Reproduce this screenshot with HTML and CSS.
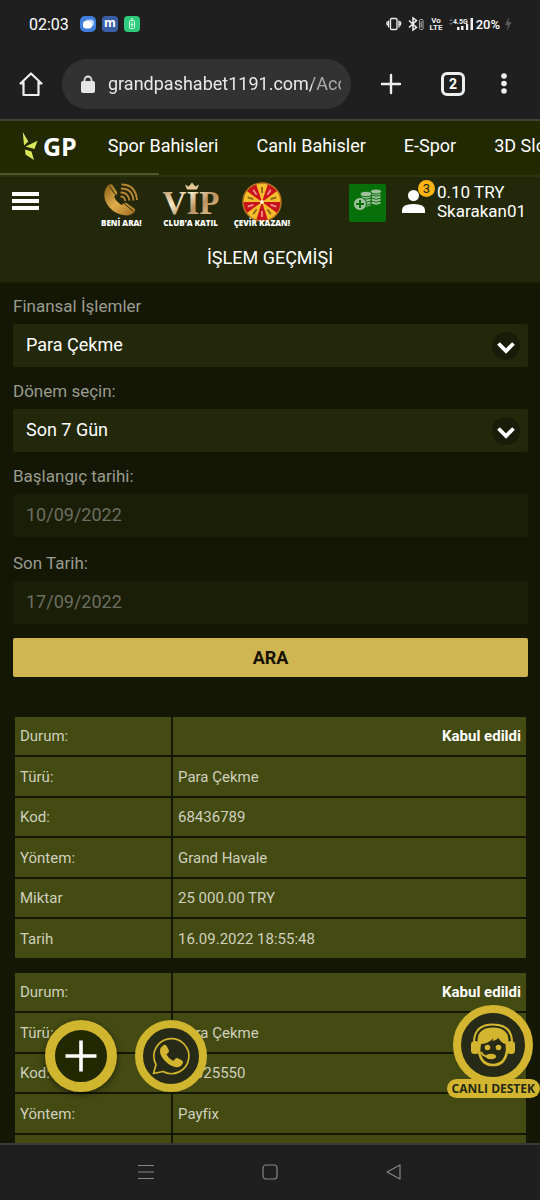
FILE: index.html
```html
<!DOCTYPE html>
<html lang="tr">
<head>
<meta charset="utf-8">
<meta name="viewport" content="width=device-width, initial-scale=1">
<title>İşlem Geçmişi</title>
<link rel="stylesheet" href="styles.css">
</head>
<body>
<div class="chrome">
  <div class="status">
    <time class="clock">02:03</time>
    <div class="status-apps">
      <svg width="16" height="16" viewBox="0 0 16 16"><rect width="16" height="16" rx="5" fill="#3f7fdc"/><rect x="5" y="3.500" width="9" height="7" rx="3" fill="#b5d3fb"/><rect x="3" y="5" width="9" height="7.500" rx="3" fill="#fff"/></svg>
      <svg width="16" height="16" viewBox="0 0 16 16"><rect width="16" height="16" rx="4" fill="#3b5fa6"/><text x="8" y="11" text-anchor="middle" class="app-letter">m</text></svg>
      <svg width="16" height="16" viewBox="0 0 16 16"><rect width="16" height="16" rx="4" fill="#2ecb7c"/><rect x="5.500" y="4.500" width="5" height="8" rx="1" fill="none" stroke="#d8ffe8"/><path d="M7 3h2M8.500 6l-1.500 2.500h2L7.500 11" fill="none" stroke="#d8ffe8"/></svg>
    </div>
    <div class="status-icons">
      <svg width="16" height="16" viewBox="0 0 16 16" fill="none" stroke="#eee" stroke-width="1.300"><rect x="4.500" y="2.500" width="6.500" height="11" rx="1"/><path d="M2.600 4.500v7M.8 5.500l.6 1-.6 1 .6 1-.6 1M13 4.500v7M14.800 5.500l-.6 1 .6 1-.6 1 .6 1"/></svg>
      <svg width="16" height="16" viewBox="0 0 16 16" fill="none" stroke="#eee" stroke-width="1.500"><path d="M1 4.500l7.500 7L5 14V2l3.500 2.500-7.500 7"/><rect x="11.500" y="3.500" width="3.500" height="10" rx="1" stroke="#aaa" stroke-width="1"/><path d="M13.200 5.500v6" stroke="#888"/></svg>
      <svg width="12" height="16" viewBox="0 0 12 16" class="tiny volte"><text x="6" y="7" text-anchor="middle">Vo</text><text x="6" y="14" text-anchor="middle">LTE</text></svg>
      <svg width="26" height="16" viewBox="0 0 26 16" class="tiny"><path d="M1 5l2-2 2 2zM1 7l2 2 2-2z" fill="#666"/><text x="5" y="8">4.5G</text><path d="M9 11h2.500v3H9zM13 10h2.500v4H13zM18 8h2.200v6H18zM22.500 2H25v12h-2.500z" fill="#eee"/></svg>
      <span class="battery">20%</span>
      <svg width="8" height="16" viewBox="0 0 8 16"><path d="M5 1L1 9h3l-1 6 4.500-9H4.500z" fill="#5b5b5b"/></svg>
    </div>
  </div>
  <div class="browser">
    <button class="icon-btn" aria-label="Ana sayfa"><svg width="24" height="24" viewBox="0 0 24 24" fill="none" stroke="#eee" stroke-width="2.200" stroke-linejoin="round" stroke-linecap="round"><path d="M4.500 11.500H1.500L12 1.500l10.500 10h-3M4.500 10v13h15V10"/></svg></button>
    <div class="address">
      <svg width="14" height="18" viewBox="0 0 14 18"><path d="M3.500 8V5a3.500 3.500 0 0 1 7 0v3" fill="none" stroke="#e6e6e6" stroke-width="1.800"/><rect x="0" y="6" width="14" height="12" rx="2" fill="#e6e6e6"/></svg>
      <input class="url" type="text" aria-label="Adres" value="grandpashabet1191.com/Acc">
    </div>
    <div class="browser-actions">
      <button class="icon-btn" aria-label="Yeni sekme"><svg width="24" height="24" viewBox="0 0 24 24" stroke="#eee" stroke-width="2.400" stroke-linecap="round"><path d="M12 3v18M3 12h18"/></svg></button>
      <button class="icon-btn tabs" aria-label="Sekmeler">2</button>
      <button class="icon-btn" aria-label="Menü"><svg width="24" height="24" viewBox="0 0 24 24" fill="#eee"><circle cx="12" cy="4" r="2.800"/><circle cx="12" cy="11.500" r="2.800"/><circle cx="12" cy="19" r="2.800"/></svg></button>
    </div>
  </div>
</div>

<div class="viewport">
  <nav class="categories">
    <a href="#" class="logo" aria-label="GP">
      <svg width="17" height="30" viewBox="0 0 17 30"><path d="M.8 1l5.500 9.500L2 14.500zM3.500 15.500L15.500 9.800 12.500 18zM3 18.500l6.500 2L12 29 3.500 23.500z" fill="#d8e65c"/></svg>
      <span>GP</span>
    </a>
    <a href="#">Spor Bahisleri</a>
    <a href="#">Canlı Bahisler</a>
    <a href="#">E-Spor</a>
    <a href="#">3D Slots</a>
  </nav>

  <header class="header">
    <div class="toolbar">
      <button class="menu" aria-label="Menü"><span></span><span></span><span></span></button>
      <div class="promos">
        <a href="#" class="promo promo-call">
          <svg width="36" height="34" viewBox="0 0 36 34"><defs><linearGradient id="gold" x1="0" y1="0" x2="1" y2="1"><stop offset="0" stop-color="#8a5f16"/><stop offset=".5" stop-color="#e0ad4c"/><stop offset="1" stop-color="#9c6b1e"/></linearGradient></defs><path d="M5 3.500Q8 1 10 3.500l4 6.500q.8 1.800-.8 3L11 14.500q2 5 7.500 8.500l2.700-1.800q1.800-1 3 .4l7.500 5.200q1.200 1.800-.5 3.300-3 3.400-7.500 3.400Q13 33 6.500 25.500T1.500 10Q2.200 6 5 3.500z" fill="url(#gold)"/><path d="M6.500 4.500l7 9.500M20.500 21l9.500 8" stroke="#222809" stroke-width="1"/><path d="M17.500 14.500a4 4 0 0 1 4.500 4.500M17.500 10.500q7.500-.5 9 8M18 6.500q11.500 0 12.500 12M18.500 2.500q14 0 15.500 15.500" fill="none" stroke="#b88532" stroke-width="1.900"/></svg>
          <span>BENİ ARA!</span>
        </a>
        <a href="#" class="promo">
          <svg width="58" height="34" viewBox="0 0 58 34"><defs><linearGradient id="vip" x1="0" y1="0" x2="1" y2="1"><stop offset="0" stop-color="#a97f50"/><stop offset=".35" stop-color="#f7e9c6"/><stop offset=".6" stop-color="#b98f60"/><stop offset="1" stop-color="#f3dfb4"/></linearGradient></defs><text x="29" y="32" text-anchor="middle" class="vip-text">VIP</text><path d="M25 7.500L23 2.500l3.700 2L30 .5l3.300 4 3.700-2-2 5z" fill="#e4c796"/></svg>
          <span>CLUB’A KATIL</span>
        </a>
        <a href="#" class="promo">
          <svg width="40" height="40" viewBox="-20 -20 40 40"><circle r="19" fill="#c9121c"/><g fill="#f6bd2d"><path d="M0 0L-5.900-18.100A19 19 0 0 1 5.900-18.100z"/><path d="M0 0L-5.900-18.100A19 19 0 0 1 5.900-18.100z" transform="rotate(72)"/><path d="M0 0L-5.900-18.100A19 19 0 0 1 5.900-18.100z" transform="rotate(144)"/><path d="M0 0L-5.900-18.100A19 19 0 0 1 5.900-18.100z" transform="rotate(216)"/><path d="M0 0L-5.900-18.100A19 19 0 0 1 5.900-18.100z" transform="rotate(288)"/></g><g stroke-width="1.800"><path d="M0-15v6M14.300-4.600L8.600-2.800M8.800 12.100L5.300 7.300M-8.800 12.100L-5.300 7.300M-14.300-4.600L-8.600-2.800" stroke="#8a6414"/><path d="M0 15V9M-14.300 4.600L-8.600 2.800M-8.800-12.100L-5.300-7.300M8.800-12.100L5.300-7.300M14.300 4.600L8.600 2.800" stroke="#f0908a"/></g><circle r="19" fill="none" stroke="#b5761f" stroke-width="1.500"/><circle r="2" fill="#fff2c4"/></svg>
          <span>ÇEVİR KAZAN!</span>
        </a>
      </div>
      <a href="#" class="deposit" aria-label="Para yatır">
        <svg width="30" height="24" viewBox="0 0 30 24" fill="#9fc09d" stroke="#087008" stroke-width="1"><path d="M18 3v13q5 2.500 10 0V3z"/><ellipse cx="23" cy="3.500" rx="5.500" ry="2.500"/><path d="M18 7q5 2.500 10.500 0M18 10q5 2.500 10.500 0M18 13q5 2.500 10.500 0" fill="none"/><path d="M8 6v12q5 2.500 10 0V6z"/><ellipse cx="13" cy="6" rx="6" ry="2.800"/><path d="M8 10q5 2.500 10.500 0M8 13q5 2.500 10.500 0M8 16q5 2.500 10.500 0" fill="none"/><circle cx="7" cy="16" r="6.500"/><path d="M7 12v8M3 16h8" stroke-width="2"/></svg>
      </a>
      <a href="#" class="user">
        <span class="avatar">
          <svg width="23" height="23" viewBox="0 0 23 23" fill="#fff"><circle cx="11.500" cy="5.500" r="5.500"/><path d="M0 23v-3q0-6 11.500-6T23 20v3z"/></svg>
          <span class="badge">3</span>
        </span>
        <span class="account">0.10 TRY<br>Skarakan01</span>
      </a>
    </div>
    <h1 class="title">İŞLEM GEÇMİŞİ</h1>
  </header>

  <main class="content">
    <form class="filters">
      <div class="field">
        <label for="op">Finansal İşlemler</label>
        <div class="select">
          <select id="op"><option>Para Çekme</option></select>
          <svg class="arrow" width="28" height="28" viewBox="0 0 28 28"><circle cx="14" cy="14" r="14" fill="#181c08"/><path d="M6.500 11.500l7.500 7.500 7.500-7.500" fill="none" stroke="#fff" stroke-width="3.800"/></svg>
        </div>
      </div>
      <div class="field">
        <label for="period">Dönem seçin:</label>
        <div class="select">
          <select id="period"><option>Son 7 Gün</option></select>
          <svg class="arrow" width="28" height="28" viewBox="0 0 28 28"><circle cx="14" cy="14" r="14" fill="#181c08"/><path d="M6.500 11.500l7.500 7.500 7.500-7.500" fill="none" stroke="#fff" stroke-width="3.800"/></svg>
        </div>
      </div>
      <div class="field">
        <label for="from">Başlangıç tarihi:</label>
        <input id="from" class="date" type="text" value="10/09/2022" readonly>
      </div>
      <div class="field field-last">
        <label for="to">Son Tarih:</label>
        <input id="to" class="date" type="text" value="17/09/2022" readonly>
      </div>
      <button type="button" class="search">ARA</button>
    </form>

    <table class="record">
      <tr><th>Durum:</th><td class="state">Kabul edildi</td></tr>
      <tr><th>Türü:</th><td>Para Çekme</td></tr>
      <tr><th>Kod:</th><td>68436789</td></tr>
      <tr><th>Yöntem:</th><td>Grand Havale</td></tr>
      <tr><th>Miktar</th><td>25 000.00 TRY</td></tr>
      <tr><th>Tarih</th><td>16.09.2022 18:55:48</td></tr>
    </table>
    <table class="record">
      <tr><th>Durum:</th><td class="state">Kabul edildi</td></tr>
      <tr><th>Türü:</th><td>Para Çekme</td></tr>
      <tr><th>Kod:</th><td>68025550</td></tr>
      <tr><th>Yöntem:</th><td>Payfix</td></tr>
      <tr><th>&nbsp;</th><td></td></tr>
    </table>
  </main>

  <div class="floating">
    <button class="round add" aria-label="Ekle"><svg width="32" height="32" viewBox="0 0 32 32" stroke="#fff" stroke-width="3.600"><path d="M16 .5v31M.5 16h31"/></svg></button>
    <button class="round whatsapp" aria-label="WhatsApp"><svg width="38" height="38" viewBox="0 0 38 38"><path d="M1.500 36.500L4 27.500A17.500 17.500 0 1 1 11 34.500z" fill="none" stroke="#d3b52f" stroke-width="1.700" stroke-linejoin="round"/><path d="M11 8.500q2-1.800 3.500.3l2.300 4.200q.6 1.600-.6 2.700l-1.700 1.800q2.300 4.500 6.800 6.500l2-2.300q1.200-1 2.500-.4l4.300 2.200q1.600 1.200.5 3.200-2.300 4.300-7.500 3.300-6-1.500-10.500-6.500Q7.600 18 8 13.500 8.600 10 11 8.500z" fill="#d3b52f"/></svg></button>
  </div>
  <a href="#" class="support">
    <span class="support-icon"><svg width="44" height="44" viewBox="0 0 44 44"><path d="M3 18Q4 1.500 22 1.500T41 18" fill="none" stroke="#d3b52f" stroke-width="2"/><path d="M6.500 20Q5.500 4.500 22 4.500T37.500 20V30H35l-.5-9Q30 20 27.500 15q-3 3-6 3l1-3Q18 20.500 10 21l-1 9H6.500z" fill="#d3b52f"/><rect x="0" y="18" width="8" height="13" rx="3.500" fill="#d3b52f"/><rect x="36" y="18" width="8" height="13" rx="3.500" fill="#d3b52f"/><path d="M8 28q2 14 14 14t14-14" fill="none" stroke="#d3b52f" stroke-width="2.600"/><path d="M10 29q3 5.500 9 4.500" fill="none" stroke="#d3b52f" stroke-width="1.800"/><ellipse cx="20" cy="33.500" rx="5" ry="2.800" fill="#d3b52f"/><circle cx="16.500" cy="24.500" r="2.800" fill="#d3b52f"/><circle cx="27.500" cy="24.500" r="2.800" fill="#d3b52f"/></svg></span>
    <span class="support-label">CANLI DESTEK</span>
  </a>
</div>

<div class="system-nav">
  <button aria-label="Son uygulamalar"><svg width="16" height="18" viewBox="0 0 16 18" stroke="#858585" stroke-width="1.200"><path d="M0 2.500h16M0 9h16M0 15.500h16"/></svg></button>
  <button aria-label="Ana ekran"><svg width="16" height="18" viewBox="0 0 16 18" fill="none" stroke="#858585" stroke-width="1.200"><rect x="1" y="2" width="14" height="14" rx="3"/></svg></button>
  <button aria-label="Geri"><svg width="16" height="18" viewBox="0 0 16 18" fill="none" stroke="#858585" stroke-width="1.200" stroke-linejoin="round"><path d="M14 2v14L1 9z"/></svg></button>
</div>
</body>
</html>
```

FILE: styles.css
```css
* { box-sizing: border-box; }

body {
  margin: 0;
  height: 100vh;
  display: flex;
  flex-direction: column;
  background: #141703;
  color: #fff;
  font-family: Roboto, "Liberation Sans", sans-serif;
}

a { color: inherit; text-decoration: none; }
svg { display: block; flex: none; overflow: visible; }
button { margin: 0; padding: 0; border: 0; background: none; color: inherit; font-family: inherit; }
input, select { font-family: inherit; border: 0; outline: 0; }

/* Device and browser bars */
.chrome { flex: none; background: #1f1f1f; border-bottom: 2px solid #424435; }
.status { display: flex; align-items: center; height: 48px; padding: 0 28px 0 29px; }
.clock { font: 400 16px Roboto, sans-serif; }
.status-apps { display: flex; gap: 6px; margin-left: 11px; }
.app-letter { font: 700 12px "Open Sans", sans-serif; fill: #fff; }
.status-icons { display: flex; align-items: center; gap: 6px; margin-left: auto; }
.tiny { font: 700 7px Roboto, sans-serif; fill: #eee; }
.volte { font-size: 8px; }
.battery { font: 500 13px Roboto, sans-serif; margin: 0 -2px 0 -4px; }

.browser { display: flex; align-items: center; height: 71px; padding: 0 24px 0 19px; }
.icon-btn { display: flex; align-items: center; justify-content: center; width: 24px; height: 24px; flex: none; }
.address {
  display: flex; align-items: center; flex: 1; gap: 13px; min-width: 0;
  height: 50px; margin: 0 28px 0 19px; padding: 0 10px 0 19px;
  border-radius: 25px; background: #323232;
}
.url {
  flex: 1; min-width: 0; padding: 0; background: none; color: #e8e8e8;
  font-size: 18px; line-height: 24px;
  mask-image: linear-gradient(to right, #000 204px, rgba(0, 0, 0, .65) 204px);
}
.browser-actions { display: flex; gap: 38px; }
.browser-actions .icon-btn:last-child { margin-left: -11px; }
.tabs { border: 3px solid #eee; border-radius: 6px; font-size: 14px; font-weight: 700; }

/* Site header */
.viewport { position: relative; flex: 1; min-height: 0; overflow: hidden; }
.categories {
  position: relative;
  display: flex; align-items: center; gap: 38px; height: 56px; padding: 0 22px 5px;
  overflow: hidden; white-space: nowrap;
  background: #222801; border-bottom: 2px solid #2d340c;
  font-size: 18px;
}
.categories::after {
  content: ""; position: absolute; left: 0; bottom: 0;
  width: 159px; height: 2px; background: #50562a;
}
.logo { display: flex; align-items: center; gap: 4px; margin-right: -7px; font: 700 25px "Open Sans", sans-serif; }

.header { background: #222809; border-bottom: 1px solid #1a1f08; }
.toolbar { display: flex; align-items: flex-start; height: 60px; padding: 5px 14px 0 12px; }
.menu { display: flex; flex-direction: column; gap: 3px; width: 27px; margin-top: 10px; }
.menu span { height: 4px; background: #fff; }
.promos { display: flex; gap: 14px; margin-left: 62px; }
.promo {
  display: flex; flex-direction: column; align-items: center;
  height: 46px; white-space: nowrap; font: 800 8px/10px "Open Sans", sans-serif;
}
.promo-call { margin-right: 6px; }
.promo span { margin-top: auto; }
.promo svg { margin-bottom: -4px; }
.vip-text { font: 700 33px "Liberation Serif", serif; fill: url(#vip); }
.deposit {
  display: flex; align-items: center; justify-content: center;
  width: 37px; height: 38px; margin: 2px 0 0 auto; padding-bottom: 6px;
  border-radius: 2px; background: #087008;
}
.user { display: flex; gap: 12px; margin-left: 16px; }
.avatar { position: relative; margin-top: 8px; }
.badge {
  position: absolute; left: 16px; top: -10px; width: 17px; height: 17px;
  border-radius: 50%; background: #fdb515; color: #222;
  font-size: 13px; line-height: 17px; text-align: center;
}
.account { font-size: 17px; line-height: 19px; margin-top: 1px; }
.title { margin: 0; padding: 9px 0 12px; text-align: center; font-size: 18px; line-height: 24px; font-weight: 400; }

/* Filters */
.content { padding: 13px 12px 0 13px; }
.filters { display: flex; flex-direction: column; gap: 14px; }
.field { display: flex; flex-direction: column; gap: 8px; }
.field-last { margin-top: 2px; }
.field label { color: #9a9b90; font-size: 17px; line-height: 20px; }
.select { position: relative; display: flex; }
.select select, .date {
  width: 100%; height: 43px; padding: 0 13px 3px; border-radius: 2px; font-size: 18px;
}
.select select { appearance: none; background: #222809; color: #fff; }
.arrow { position: absolute; right: 8px; top: 8px; pointer-events: none; }
.date { background: #1a1e07; color: #6c6e60; }
.search {
  height: 39px; border-radius: 2px; background: #cfb652; color: #171200;
  font-size: 18px; font-weight: 700;
}

/* Records */
.record { width: 100%; margin-top: 38px; border-spacing: 2px; table-layout: fixed; font-size: 15px; color: #cfd0bd; }
.record + .record { margin-top: 11px; }
.record th, .record td { height: 38px; padding: 0 5px; background: #434a12; text-align: left; font-weight: 400; }
.record tr:nth-child(even) > * { height: 39px; }
.record th { width: 156px; }
.record .state { text-align: right; font-weight: 700; color: #fff; }

/* Floating actions */
.floating { position: absolute; left: 45px; bottom: 51px; display: flex; gap: 18px; }
.round {
  display: flex; align-items: center; justify-content: center;
  width: 72px; height: 72px; border-radius: 50%; border: 10px solid #d0b52f;
}
.add { background: #222801; box-shadow: 0 2px 6px rgba(0, 0, 0, .5); }
.whatsapp { background: #262a16; border-width: 8px; }
.support { position: absolute; right: 0; bottom: 45px; display: flex; flex-direction: column; align-items: center; }
.support-icon {
  display: flex; align-items: center; justify-content: center;
  width: 80px; height: 80px; border-radius: 50%; border: 8px solid #d3b52f; background: #262a16;
}
.support-label {
  margin-top: -6px; padding: 0 5px; border-radius: 10px; background: #d3b52f; color: #262a16;
  font: 700 12px/19px "Open Sans", sans-serif;
}

.system-nav {
  flex: none; display: flex; align-items: center; justify-content: center; gap: 108px;
  height: 57px; padding-bottom: 2px; background: #1f1f1f; border-top: 2px solid #3a3b36;
}
```
